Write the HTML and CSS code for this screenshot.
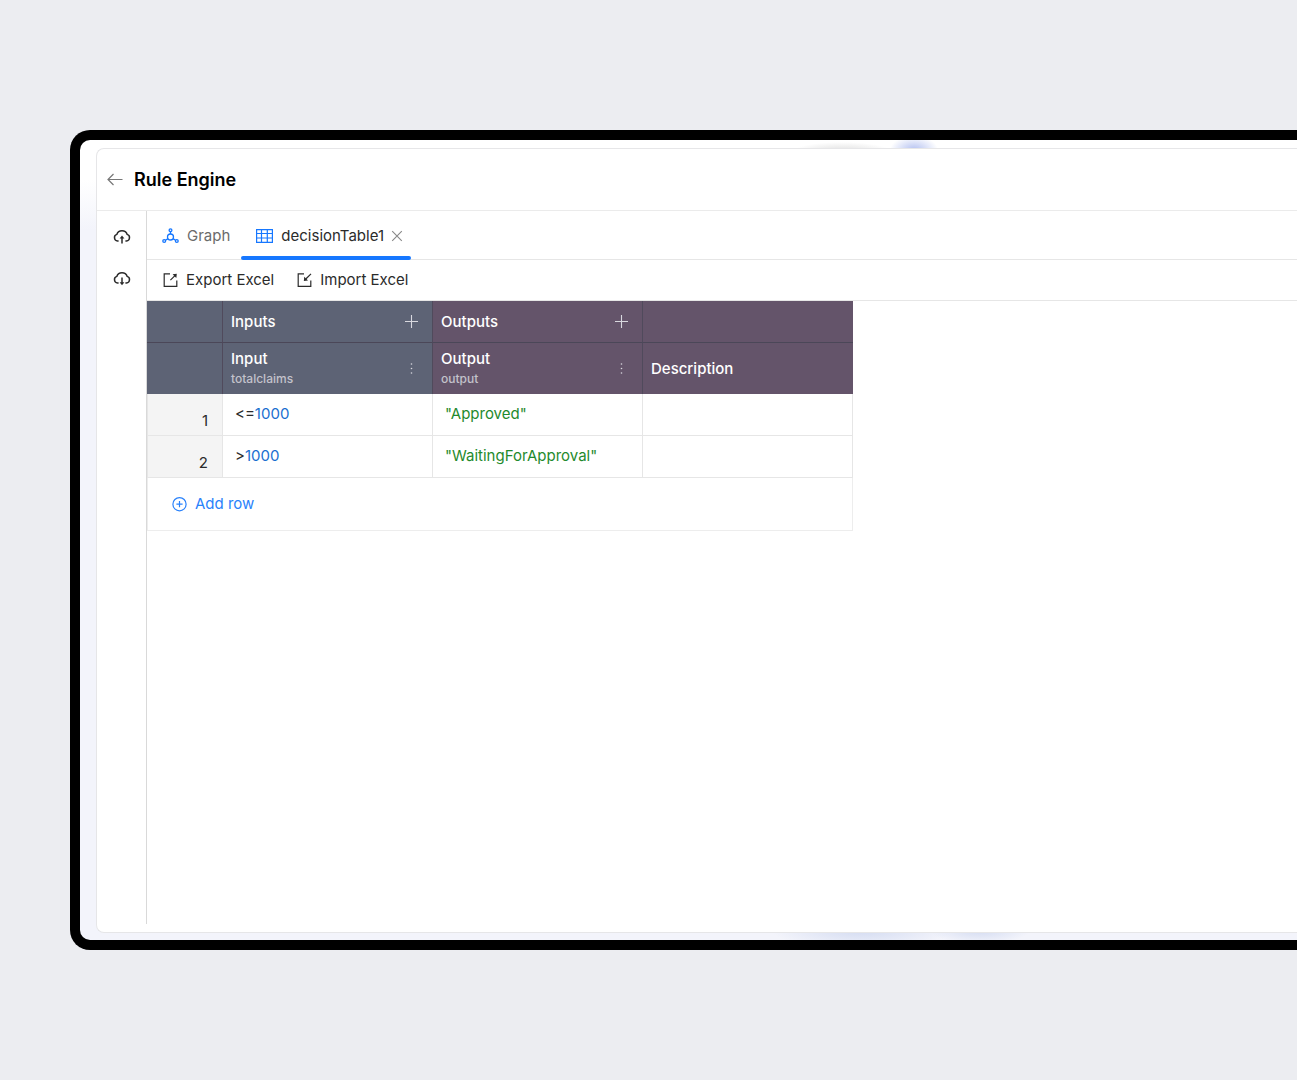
FILE: index.html
```html
<!DOCTYPE html>
<html lang="en">
<head>
  <meta charset="UTF-8" />
  <meta name="viewport" content="width=device-width, initial-scale=1.0" />
  <title>Rule Engine</title>
  <link rel="stylesheet" href="styles.css">
</head>
<body>
  <div class="device">
    <div class="panel">
      <header class="header">
        <button type="button" class="icon-btn back" aria-label="Back">
          <svg width="16" height="14" viewBox="0 0 16 14" fill="none" stroke="currentColor" stroke-width="1.2">
            <path d="M15.5 6.5H1M6.5 1L1 6.5 6.5 12" />
          </svg>
        </button>
        <h1>Rule Engine</h1>
      </header>

      <div class="body">
        <aside class="rail">
          <button type="button" class="icon-btn" aria-label="Upload">
            <svg width="18" height="16" viewBox="0 0 18 16" fill="none" stroke="currentColor" stroke-width="1.5">
              <path d="M5.6 12H4.5A3.4 3.4 0 0 1 3.8 5.4 5.5 5.5 0 0 1 14.2 5.4 3.4 3.4 0 0 1 13.5 12H12.4" />
              <path d="M9 14.5V8" />
              <path d="M6.6 9.4L9 6.4l2.4 3z" fill="currentColor" stroke="none" />
            </svg>
          </button>
          <button type="button" class="icon-btn" aria-label="Download">
            <svg width="18" height="16" viewBox="0 0 18 16" fill="none" stroke="currentColor" stroke-width="1.5">
              <path d="M5.6 12H4.5A3.4 3.4 0 0 1 3.8 5.4 5.5 5.5 0 0 1 14.2 5.4 3.4 3.4 0 0 1 13.5 12H12.4" />
              <path d="M9 6.5V13" />
              <path d="M6.6 11.2L9 14.2l2.4-3z" fill="currentColor" stroke="none" />
            </svg>
          </button>
        </aside>

        <main class="content">
          <nav class="tabs">
            <button type="button" class="tab">
              <svg width="17" height="16" viewBox="0 0 17 16" fill="none" stroke="#1677ff" stroke-width="1.3">
                <circle cx="8.5" cy="9" r="3" />
                <circle cx="8.5" cy="2.2" r="1.4" />
                <circle cx="2.2" cy="13" r="1.4" />
                <circle cx="14.8" cy="13" r="1.4" />
                <path d="M8.5 3.7V6M6 10.6l-2.5 1.6M11 10.6l2.5 1.6" />
              </svg>
              Graph
            </button>
            <div class="tab active">
              <button type="button" class="tab-label">
                <svg width="17" height="14" viewBox="0 0 17 14" fill="none" stroke="#1677ff" stroke-width="1.2">
                  <path d="M.6.6h15.8v12.8H.6zM.6 4.5h15.8M.6 9h15.8M5.5.6v12.8M11.3.6v12.8" />
                </svg>
                decisionTable1
              </button>
              <button type="button" class="icon-btn close" aria-label="Close tab">
                <svg width="12" height="12" viewBox="0 0 12 12" fill="none" stroke="currentColor" stroke-width="1.1">
                  <path d="M1.2 1.2l9.6 9.6M10.8 1.2l-9.6 9.6" />
                </svg>
              </button>
            </div>
          </nav>

          <div class="toolbar">
            <button type="button" class="tool">
              <svg width="15" height="15" viewBox="0 0 15 15" fill="none" stroke="currentColor" stroke-width="1.2">
                <path d="M7 .8H1.2v12.6h12.6V7.6M7.4 7.2L12 2.6" />
                <path d="M9.6 1.2l4.2-.5-.5 4.2z" fill="currentColor" stroke="none" />
              </svg>
              Export Excel
            </button>
            <button type="button" class="tool">
              <svg width="15" height="15" viewBox="0 0 15 15" fill="none" stroke="currentColor" stroke-width="1.2">
                <path d="M7 .8H1.2v12.6h12.6V7.6M14 .8L8.8 6" />
                <path d="M7.3 3.7l-.5 4.2 4.2-.5z" fill="currentColor" stroke="none" />
              </svg>
              Import Excel
            </button>
          </div>

          <table class="decision-table">
            <colgroup>
              <col class="col-index">
              <col class="col-field">
              <col class="col-field">
              <col class="col-field">
            </colgroup>
            <thead>
              <tr class="groups">
                <th class="in"></th>
                <th class="in">
                  <div class="head">
                    Inputs
                    <button type="button" class="icon-btn" aria-label="Add input">
                      <svg width="14" height="14" viewBox="0 0 14 14" stroke="currentColor" stroke-width="1.1"><path d="M7.5 0v13M1 6.5h13" /></svg>
                    </button>
                  </div>
                </th>
                <th class="out">
                  <div class="head">
                    Outputs
                    <button type="button" class="icon-btn" aria-label="Add output">
                      <svg width="14" height="14" viewBox="0 0 14 14" stroke="currentColor" stroke-width="1.1"><path d="M7.5 0v13M1 6.5h13" /></svg>
                    </button>
                  </div>
                </th>
                <th class="out"></th>
              </tr>
              <tr class="fields">
                <th class="in"></th>
                <th class="in">
                  <div class="head">
                    <div>Input<span class="field-name">totalclaims</span></div>
                    <button type="button" class="icon-btn" aria-label="Input options">
                      <svg width="14" height="14" viewBox="0 0 14 14" fill="currentColor"><circle cx="7.5" cy="2" r=".8" /><circle cx="7.5" cy="6.5" r=".8" /><circle cx="7.5" cy="11" r=".8" /></svg>
                    </button>
                  </div>
                </th>
                <th class="out">
                  <div class="head">
                    <div>Output<span class="field-name">output</span></div>
                    <button type="button" class="icon-btn" aria-label="Output options">
                      <svg width="14" height="14" viewBox="0 0 14 14" fill="currentColor"><circle cx="7.5" cy="2" r=".8" /><circle cx="7.5" cy="6.5" r=".8" /><circle cx="7.5" cy="11" r=".8" /></svg>
                    </button>
                  </div>
                </th>
                <th class="out">Description</th>
              </tr>
            </thead>
            <tbody>
              <tr>
                <td class="index">1</td>
                <td>&lt;=<span class="number">1000</span></td>
                <td class="string">"Approved"</td>
                <td></td>
              </tr>
              <tr>
                <td class="index">2</td>
                <td>&gt;<span class="number">1000</span></td>
                <td class="string">"WaitingForApproval"</td>
                <td></td>
              </tr>
            </tbody>
            <tfoot>
              <tr>
                <td colspan="4">
                  <button type="button" class="add-row">
                    <svg width="15" height="15" viewBox="0 0 15 15" fill="none" stroke="currentColor" stroke-width="1.2">
                      <circle cx="7.5" cy="7.2" r="6.6" />
                      <path d="M7.5 4.1v6.2M4.4 7.2h6.2" />
                    </svg>
                    Add row
                  </button>
                </td>
              </tr>
            </tfoot>
          </table>
        </main>
      </div>
    </div>
  </div>
</body>
</html>
```
FILE: styles.css
```css
* {
  box-sizing: border-box;
}
body {
  margin: 0;
  min-height: 100vh;
  padding: 130px 0 130px 70px;
  display: flex;
  background: #ecedf1;
  font-family: Inter, sans-serif;
  font-size: 15px;
  line-height: 20px;
  color: #2b2b2b;
}
button {
  display: flex;
  align-items: center;
  padding: 0;
  border: none;
  background: none;
  font: inherit;
  color: inherit;
  cursor: pointer;
}
svg {
  display: block;
  flex: none;
}

/* frame with the blurred backdrop showing around the panel */
.device {
  flex: 1;
  display: flex;
  padding: 8px 0 7px 16px;
  border: 10px solid #000;
  border-right: none;
  border-radius: 20px 0 0 20px;
  background:
    radial-gradient(ellipse 24px 14px at 834px 10px, #b3c0f0, transparent) no-repeat,
    radial-gradient(ellipse 50px 10px at 762px 12px, #dcdcdc, transparent) no-repeat,
    radial-gradient(ellipse 90px 20px at 782px 790px, #d3dbf1, transparent) no-repeat,
    radial-gradient(ellipse 50px 14px at 900px 790px, #d3dbf1, transparent) no-repeat,
    linear-gradient(#fff 40px, #f3f4fb 90px, #f3f4fb);
}
.panel {
  flex: 1;
  display: flex;
  flex-direction: column;
  border: 1px solid #e6e6e8;
  border-right: none;
  border-radius: 8px 0 0 8px;
  background: #fff;
}
.header {
  display: flex;
  align-items: center;
  gap: 11px;
  height: 62px;
  padding: 0 10px;
  border-bottom: 1px solid #ebebeb;
}
.header h1 {
  margin: 0;
  font-size: 18px;
  font-weight: 600;
  line-height: 24px;
  color: #000;
}
.back {
  color: #777;
}
.body {
  flex: 1;
  display: flex;
  padding-bottom: 8px;
}
.rail {
  display: flex;
  flex-direction: column;
  align-items: center;
  gap: 26px;
  width: 50px;
  padding-top: 18px;
  border-right: 1px solid #d9d9d9;
}
.content {
  flex: 1;
}

.tabs {
  display: flex;
  height: 49px;
  border-bottom: 1px solid #e6e6e6;
}
.tab {
  display: flex;
  align-items: center;
  gap: 8px;
  padding: 2px 11px 0 15px;
  color: #6b6b6b;
}
.tab-label {
  gap: 8px;
}
.tab.active {
  position: relative;
  gap: 7px;
  padding-right: 8px;
  color: #2b2b2b;
}
.tab.active::after {
  content: "";
  position: absolute;
  left: 0;
  right: 0;
  bottom: -1px;
  height: 4px;
  border-radius: 2px;
  background: #1677ff;
}
.close {
  color: #888;
}
.toolbar {
  display: flex;
  gap: 23px;
  height: 41px;
  padding: 0 16px;
  border-bottom: 1px solid #e6e6e6;
}
.tool {
  gap: 8px;
}

.decision-table {
  width: 706px;
  table-layout: fixed;
  border-collapse: separate;
  border-spacing: 0;
}
.col-index {
  width: 76px;
}
.col-field {
  width: 210px;
}
th,
td {
  height: 42px;
  padding: 0 8px;
  text-align: left;
}
th {
  border-right: 1px solid #504a5c;
  color: #fff;
  font-weight: 500;
}
.groups th {
  border-bottom: 1px solid #4b4758;
}
.fields th {
  height: 51px;
}
th:last-child {
  border-right: none;
}
.in {
  background: #5d6375;
}
.out {
  background: #64546a;
}
.head {
  display: flex;
  align-items: center;
  justify-content: space-between;
  padding-right: 6px;
}
.head .icon-btn {
  color: #d8d8de;
}
.field-name {
  display: block;
  font-size: 12px;
  color: #c3c2cb;
}
tbody td {
  padding: 10px 12px;
  border-right: 1px solid #e6e6e6;
  border-bottom: 1px solid #e6e6e6;
  vertical-align: top;
}
tbody .index {
  padding: 0 14px 4px 0;
  border-left: 1px solid #e6e6e6;
  background: #f4f4f4;
  text-align: right;
  vertical-align: bottom;
}
.number {
  color: #1a6fd0;
}
.string {
  color: #1f8a2d;
}
tfoot td {
  height: 53px;
  padding: 0 24px;
  border: 1px solid #ededed;
  border-top: none;
}
.add-row {
  gap: 8px;
  color: #2a82fb;
}
```
